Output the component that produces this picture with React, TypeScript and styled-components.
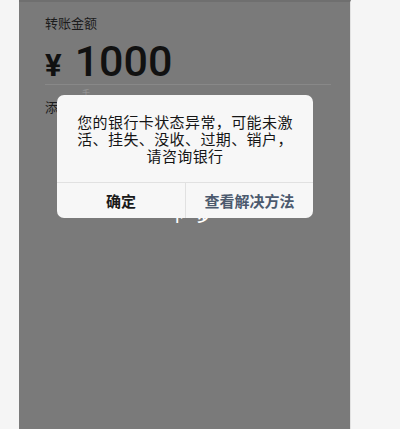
import React from 'react'
import styled, { createGlobalStyle } from 'styled-components'

const GlobalStyle = createGlobalStyle`
  html, body {
    margin: 0;
    padding: 0;
    background: #f5f5f5;
  }
  body {
    font-family: 'Noto Sans CJK SC', 'Noto Sans', sans-serif;
  }
`

const messageLines = ['您的银行卡状态异常，可能未激', '活、挂失、没收、过期、销户，', '请咨询银行']

export default function App() {
  return (
    <>
      <GlobalStyle />
      <Page>
        <Screen>
          <FieldLabel>转账金额</FieldLabel>
          <AmountRow>
            <Currency>¥</Currency>
            <Amount>1000</Amount>
          </AmountRow>
          <Divider />
          <Hint>千</Hint>
          <FieldLabel>添加转账说明</FieldLabel>
          <SubmitText>下一步</SubmitText>

          <Dialog>
            <Message>
              {messageLines.map(line => (
                <MessageLine key={line}>{line}</MessageLine>
              ))}
            </Message>
            <Actions>
              <ActionButton>确定</ActionButton>
              <ActionButton $secondary>查看解决方法</ActionButton>
            </Actions>
          </Dialog>
        </Screen>
      </Page>
    </>
  )
}

const Page = styled.div`
  display: flex;
  padding-left: 19px;
  height: 429px;
`

const Screen = styled.div`
  position: relative;
  display: flex;
  flex-direction: column;
  width: 332px;
  height: 429px;
  box-sizing: border-box;
  padding: 12px 22px 0 26px;
  background: #7a7a7a;
  border-top: 2px solid #6f6f6f;
  border-right: 1px solid #e2e2e2;
  overflow: hidden;
`

const FieldLabel = styled.div`
  font-size: 13px;
  line-height: 18px;
  color: #1c1c1c;
  white-space: nowrap;
`

const AmountRow = styled.div`
  display: flex;
  align-items: baseline;
  gap: 13px;
  margin-top: 6px;
  height: 46px;
  line-height: 46px;
  font-family: Roboto, 'Liberation Sans', Arial, sans-serif;
  color: #111;
`

const Currency = styled.span`
  font-size: 31px;
  font-weight: 700;
`

const Amount = styled.span`
  font-size: 43px;
  font-weight: 500;
`

const Divider = styled.div`
  height: 1px;
  margin-right: -3px;
  background: #888888;
`

const Hint = styled.div`
  margin: 2px 0 0 37px;
  font-size: 8px;
  line-height: 11px;
  color: #9a9a9a;
`

const SubmitText = styled.div`
  align-self: center;
  margin-top: 92px;
  margin-left: 8px;
  font-size: 13px;
  line-height: 16px;
  font-weight: 700;
  color: #ffffff;
`

const Dialog = styled.div`
  position: absolute;
  left: 38px;
  top: 93px;
  width: 256px;
  background: #f7f7f7;
  border-radius: 7px;
  overflow: hidden;
`

const Message = styled.div`
  padding: 18px 8px 18px;
  font-size: 15px;
  line-height: 17px;
  letter-spacing: 0.4px;
  color: #151515;
  text-align: center;
`

const MessageLine = styled.div`
  white-space: nowrap;
`

const Actions = styled.div`
  display: grid;
  grid-template-columns: 1fr 1fr;
  border-top: 1px solid #e1e1e1;
`

const ActionButton = styled.div<{ $secondary?: boolean }>`
  height: 35px;
  display: flex;
  align-items: center;
  justify-content: center;
  font-size: 15px;
  font-weight: 600;
  color: ${p => (p.$secondary ? '#4c5a6e' : '#1a1a1a')};
  border-left: ${p => (p.$secondary ? '1px solid #e1e1e1' : 'none')};
`
